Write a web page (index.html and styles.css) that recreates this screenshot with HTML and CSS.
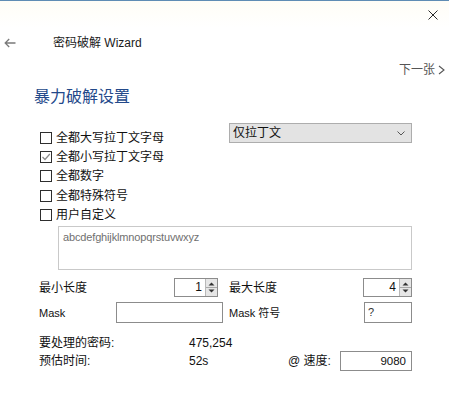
FILE: index.html
```html
<!DOCTYPE html>
<html lang="zh-CN">
<head>
<meta charset="utf-8">
<title>密码破解 Wizard</title>
<link rel="stylesheet" href="styles.css">
</head>
<body>
<div class="window">
  <div class="topbar">
    <svg class="close" width="10" height="10" viewBox="0 0 10 10"><path d="M0.5 0.5L9.5 9.5M9.5 0.5L0.5 9.5" stroke="#2a2a2a" stroke-width="1"/></svg>
  </div>
  <div class="nav">
    <svg class="back" width="12" height="10" viewBox="0 0 12 10"><path d="M11.5 5H1.2M5.2 1L1.2 5L5.2 9" fill="none" stroke="#7a7a7a" stroke-width="1.3"/></svg>
    <span class="title">密码破解 Wizard</span>
  </div>
  <div class="next">下一张<svg class="next-chev" width="7" height="10" viewBox="0 0 7 10"><path d="M1 1L6 5L1 9" fill="none" stroke="#555" stroke-width="1.1"/></svg></div>
  <h1 class="heading">暴力破解设置</h1>

  <div class="options">
    <div class="checks">
      <div class="check"><span class="box"></span>全都大写拉丁文字母</div>
      <div class="check"><span class="box"><svg width="10" height="10" viewBox="0 0 10 10"><path d="M1.5 5L4 7.5L8.8 2" fill="none" stroke="#8a8a8a" stroke-width="1.2"/></svg></span>全都小写拉丁文字母</div>
      <div class="check"><span class="box"></span>全都数字</div>
      <div class="check"><span class="box"></span>全都特殊符号</div>
      <div class="check"><span class="box"></span>用户自定义</div>
    </div>
    <div class="select">
      <span>仅拉丁文</span>
      <svg width="8" height="5" viewBox="0 0 8 5"><path d="M0.5 0.5L4 4L7.5 0.5" fill="none" stroke="#555" stroke-width="1"/></svg>
    </div>
  </div>

  <div class="charset">abcdefghijklmnopqrstuvwxyz</div>

  <div class="row row-spin">
    <div class="half left">
      <span class="label">最小长度</span>
      <div class="spin spin-min">
        <span class="spin-val">1</span>
        <span class="spin-btns"><svg width="11" height="17" viewBox="0 0 11 17"><path d="M2.5 6.5H8.5L5.5 3.5Z" fill="#333"/><path d="M0 8.5H11" stroke="#a8a8a8" stroke-width="1"/><path d="M2.5 10.5H8.5L5.5 13.5Z" fill="#333"/></svg></span>
      </div>
    </div>
    <div class="half right">
      <span class="label">最大长度</span>
      <div class="spin spin-max">
        <span class="spin-val">4</span>
        <span class="spin-btns"><svg width="11" height="17" viewBox="0 0 11 17"><path d="M2.5 6.5H8.5L5.5 3.5Z" fill="#333"/><path d="M0 8.5H11" stroke="#a8a8a8" stroke-width="1"/><path d="M2.5 10.5H8.5L5.5 13.5Z" fill="#333"/></svg></span>
      </div>
    </div>
  </div>

  <div class="row row-mask">
    <div class="half left">
      <span class="label latin">Mask</span>
      <div class="field field-mask"></div>
    </div>
    <div class="half right">
      <span class="label latin">Mask 符号</span>
      <div class="field field-sym">?</div>
    </div>
  </div>

  <div class="summary">
    <span class="s-label">要处理的密码:</span>
    <span class="s-val">475,254</span>
    <span></span>
    <span></span>
    <span class="s-label">预估时间:</span>
    <span class="s-val">52s</span>
    <span class="s-speed">@ 速度:</span>
    <div class="field field-speed">9080</div>
  </div>
</div>
</body>
</html>
```

FILE: styles.css
```css
html, body {
  margin: 0;
  padding: 0;
  background: #fff;
}

body {
  font-family: "Liberation Sans", "Noto Sans CJK SC", sans-serif;
  font-size: 12px;
  color: #111;
}

.window {
  width: 449px;
  height: 404px;
  box-sizing: border-box;
  border-top: 1px solid #5f8cb4;
  background: #fff;
}

.topbar {
  height: 27px;
  display: flex;
  justify-content: flex-end;
  align-items: flex-start;
  padding: 9px 11px 0 0;
  box-sizing: border-box;
  background: linear-gradient(#fffdf6, #fff);
}

.close {
  display: block;
}

.nav {
  height: 30px;
  display: flex;
  align-items: center;
  padding-left: 4px;
}

.back {
  display: block;
}

.title {
  margin-left: 37px;
  font-size: 12px;
  color: #1a1a1a;
  line-height: 16px;
}

.next {
  height: 24px;
  display: flex;
  justify-content: flex-end;
  align-items: center;
  padding-right: 4px;
  color: #555;
  font-size: 12px;
  line-height: 16px;
}

.next-chev {
  display: block;
  margin-left: 3px;
}

.heading {
  margin: 0 0 11px 0;
  height: 30px;
  line-height: 30px;
  padding-left: 34px;
  font-size: 16px;
  font-weight: normal;
  color: #23498a;
}

.options {
  margin-left: 39px;
  display: grid;
  grid-template-columns: 190px 183px;
}

.checks {
  padding-top: 5px;
}

.check {
  height: 19.3px;
  display: flex;
  align-items: center;
  font-size: 12px;
  line-height: 16px;
  color: #111;
}

.box {
  width: 12px;
  height: 12px;
  box-sizing: border-box;
  border: 1px solid #2e2e2e;
  background: #fff;
  margin: 0 4px 0 1px;
  display: flex;
  align-items: center;
  justify-content: center;
  flex: none;
}

.box svg {
  display: block;
}

.select {
  height: 20px;
  box-sizing: border-box;
  border: 1px solid #adadad;
  background: #e3e3e3;
  display: flex;
  align-items: center;
  justify-content: space-between;
  padding: 0 6px 0 3px;
  font-size: 12px;
  line-height: 16px;
}

.select svg {
  display: block;
}

.charset {
  margin: 2px 0 0 58px;
  width: 354px;
  height: 44px;
  box-sizing: border-box;
  border: 1px solid #c9c9c9;
  padding: 3px 0 0 4px;
  font-size: 11px;
  line-height: 14px;
  color: #707070;
  letter-spacing: -0.15px;
}

.row {
  margin-left: 39px;
  display: grid;
  grid-template-columns: 190px 183px;
}

.row-spin {
  margin-top: 8px;
  height: 19px;
}

.row-mask {
  margin-top: 5px;
  height: 21px;
}

.half {
  display: flex;
  align-items: center;
}

.half.left {
  padding-right: 11px;
}

.half.left .field-mask {
  margin-right: -5px;
}

.label {
  flex: 1;
  font-size: 12px;
  line-height: 16px;
  color: #111;
}

.label.latin {
  font-size: 11px;
}

.spin {
  display: flex;
  height: 19px;
  box-sizing: border-box;
  border: 1px solid #8c8c8c;
  background: #fff;
}

.spin-min {
  width: 44px;
}

.spin-max {
  width: 49px;
}

.spin-val {
  flex: 1;
  text-align: right;
  padding-right: 3px;
  font-size: 12px;
  line-height: 17px;
}

.spin-btns {
  width: 11px;
  background: #e6e6e6;
  border-left: 1px solid #b8b8b8;
}

.spin-btns svg {
  display: block;
}

.field {
  height: 21px;
  box-sizing: border-box;
  border: 1px solid #8c8c8c;
  background: #fff;
  font-size: 11px;
  line-height: 19px;
}

.field-mask {
  width: 107px;
}

.field-sym {
  width: 48px;
  padding-left: 3px;
  color: #333;
}

.summary {
  margin: 12px 0 0 39px;
  display: grid;
  grid-template-columns: 150px 99px 52px 72px;
  grid-template-rows: 16px 20px;
  align-items: center;
}

.s-label {
  font-size: 12px;
  line-height: 16px;
}

.s-val {
  font-size: 12px;
  line-height: 16px;
}

.s-speed {
  font-size: 12px;
  line-height: 16px;
}

.field-speed {
  width: 72px;
  height: 20px;
  line-height: 18px;
  text-align: right;
  padding-right: 5px;
  font-size: 11.5px;
}
```
